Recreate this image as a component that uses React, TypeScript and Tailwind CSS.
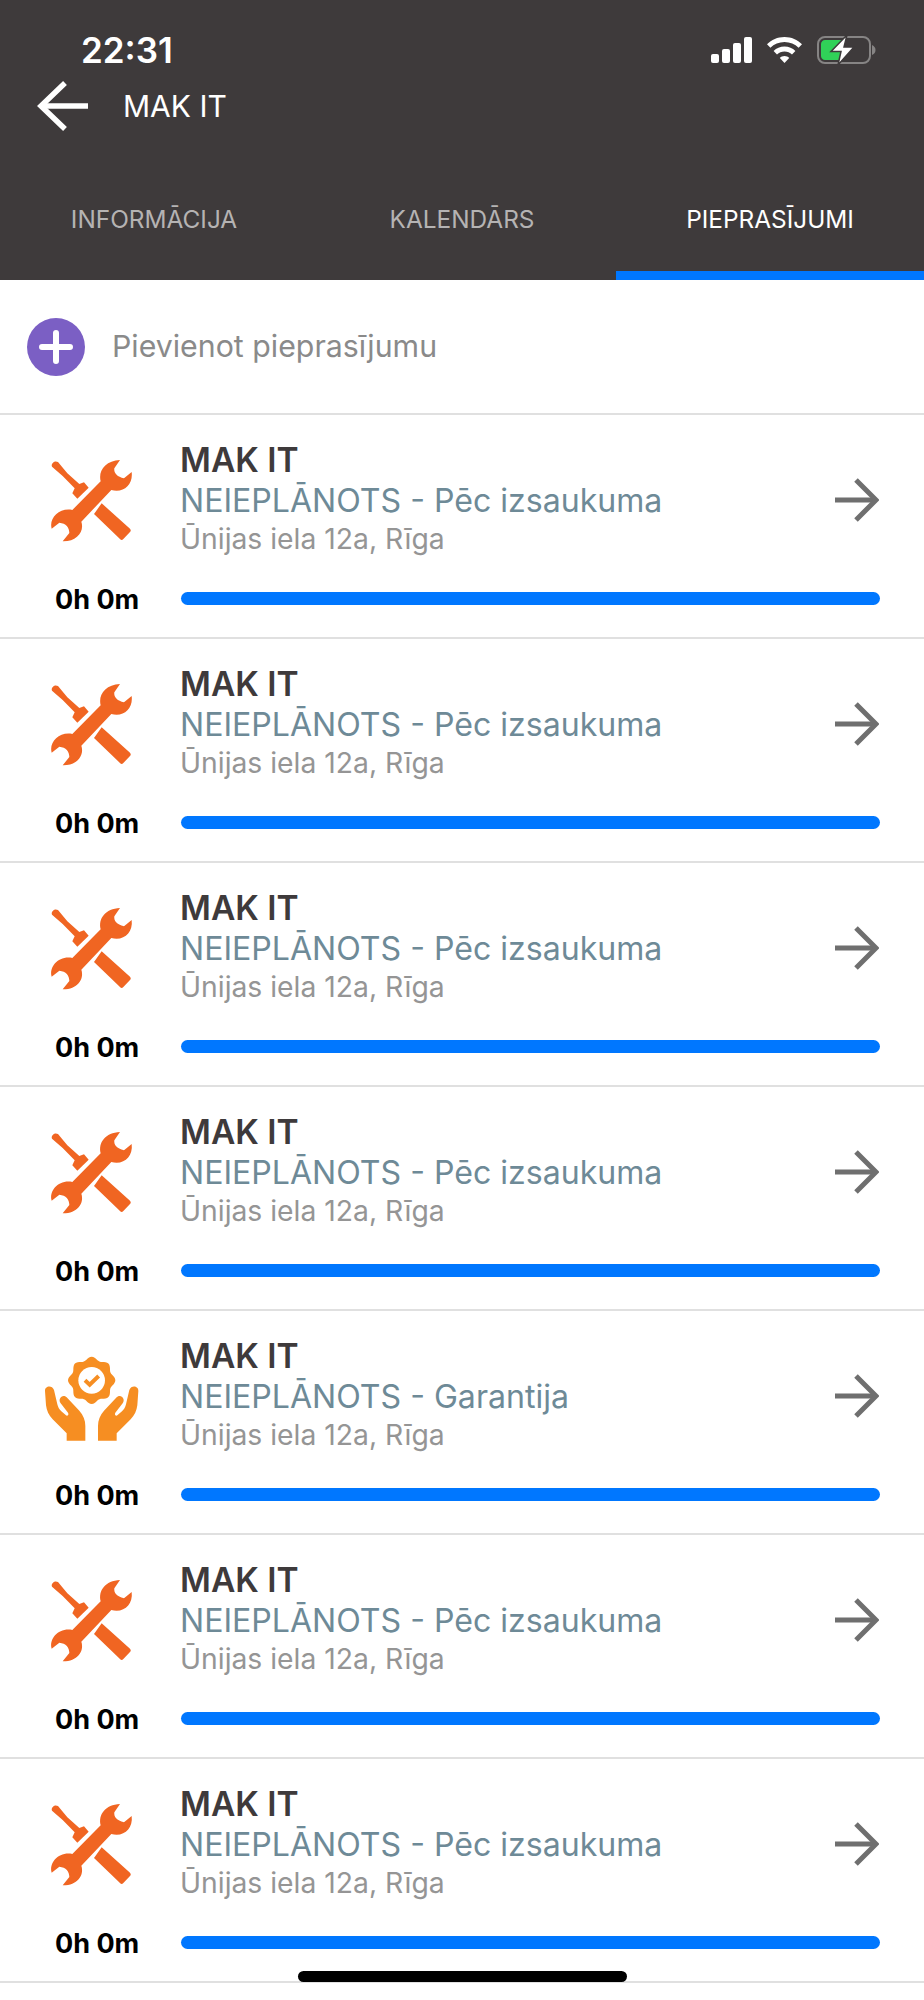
const font = { fontFamily: 'Inter, "Noto Sans", sans-serif' };

const requests = [
  { sub: 'NEIEPLĀNOTS - Pēc izsaukuma', kind: 'tools' },
  { sub: 'NEIEPLĀNOTS - Pēc izsaukuma', kind: 'tools' },
  { sub: 'NEIEPLĀNOTS - Pēc izsaukuma', kind: 'tools' },
  { sub: 'NEIEPLĀNOTS - Pēc izsaukuma', kind: 'tools' },
  { sub: 'NEIEPLĀNOTS - Garantija', kind: 'warranty' },
  { sub: 'NEIEPLĀNOTS - Pēc izsaukuma', kind: 'tools' },
  { sub: 'NEIEPLĀNOTS - Pēc izsaukuma', kind: 'tools' },
];

// scalloped badge outline for the warranty icon
function badgePath(cx: number, cy: number, r: number, lobes: number) {
  const pts: string[] = [];
  for (let i = 0; i < 96; i++) {
    const a = (i / 96) * Math.PI * 2;
    const rad = r + 5 * Math.cos(a * lobes);
    pts.push(`${(cx + rad * Math.sin(a)).toFixed(1)} ${(cy - rad * Math.cos(a)).toFixed(1)}`);
  }
  return 'M' + pts.join('L') + 'Z';
}

function ToolsIcon() {
  return (
    <svg width="130" height="110" viewBox="0 0 390 330" fill="#f06522">
      <path d="M157 210L242 124C234 92 256 62 300 60L283 85C281 98 290 110 312 115L335 96C340 135 310 160 274 150L184 245C194 275 170 305 128 304L148 279C148 262 138 250 118 248L95 266C86 235 118 202 157 210Z" />
      <path d="M96 80C92 70 104 60 114 66L142 100L178 132L192 127L206 143L172 176L157 160L164 145L128 108Z" />
      <path d="M245 190L330 266C333 270 333 273 330 276L310 297C306 301 303 300 300 297L222 222Z" />
    </svg>
  );
}

function WarrantyIcon() {
  const hand =
    'M75 165C74 150 96 146 102 162L112 205C114 214 118 220 124 226L138 238C142 241 148 236 144 230L122 202C112 188 128 172 140 184L178 224C190 238 196 252 196 270L196 314H140V292L98 250C86 238 80 224 78 208Z';
  return (
    <svg width="130" height="110" viewBox="0 0 390 330" fill="#f68e22">
      <path d={badgePath(215, 133, 66, 8)} />
      <circle cx="215" cy="133" r="40" fill="#fff" />
      <path d="M195 133L209 146L236 120" fill="none" stroke="#f68e22" strokeWidth="12" />
      <path d={hand} />
      <path transform="translate(430 0) scale(-1 1)" d={hand} />
    </svg>
  );
}

function StatusIcons() {
  return (
    <div className="flex items-center">
      <svg width="41" height="26" viewBox="0 0 41 26" fill="#fff">
        <rect x="0" y="17" width="8" height="9" rx="2" />
        <rect x="11" y="12" width="8" height="14" rx="2" />
        <rect x="22" y="6" width="8" height="20" rx="2" />
        <rect x="33" y="0" width="8" height="26" rx="2" />
      </svg>
      <svg className="ml-[15px]" width="35" height="26" viewBox="0 0 35 26" fill="#fff">
        <path d="M17.5 0C24.5 0 30.5 2.8 35 7.2L31.6 10.8C28 7.2 23 5 17.5 5S7 7.2 3.4 10.8L0 7.2C4.5 2.8 10.5 0 17.5 0Z" />
        <path d="M17.5 9.5C21.8 9.5 25.6 11.2 28.4 14L25 17.6C23 15.7 20.4 14.5 17.5 14.5S12 15.7 10 17.6L6.6 14C9.4 11.2 13.2 9.5 17.5 9.5Z" />
        <path d="M17.5 19C19.3 19 21 19.7 22.2 20.9L17.5 26L12.8 20.9C14 19.7 15.7 19 17.5 19Z" />
      </svg>
      <svg className="ml-[15px]" width="59" height="30" viewBox="0 0 59 30">
        <rect x="1" y="2" width="52" height="26" rx="7" fill="none" stroke="#868484" strokeWidth="2" />
        <path d="M55 10C57.5 11 58.5 13 58.5 15S57.5 19 55 20Z" fill="#868484" />
        <path d="M4 9C4 6.8 5.8 5 8 5H25V25H8C5.8 25 4 23.2 4 21Z" fill="#30d158" />
        <path d="M30 0L14 16.5H24L21 30L37 12H27Z" fill="#fff" stroke="#3e3a3b" strokeWidth="1.5" />
      </svg>
    </div>
  );
}

function RequestRow({ sub, kind }: { sub: string; kind: string }) {
  return (
    <div className="h-[224px] border-b-2 border-[#e0e0e0] flex flex-col">
      <div className="h-[163px] flex">
        <div className="w-[180px] shrink-0 pl-[20px] pt-[25px]">
          {kind === 'tools' ? <ToolsIcon /> : <WarrantyIcon />}
        </div>
        <div className="flex-1 pt-[24px]">
          <div className="text-[33.5px] leading-[43px] font-semibold text-[#3e3a3b]">MAK IT</div>
          <div className="text-[32.1px] leading-[38px] text-[#6e8a97]">{sub}</div>
          <div className="text-[28.3px] leading-[38px] text-[#959595]">Ūnijas iela 12a, Rīga</div>
        </div>
        <div className="w-[89px] shrink-0 pt-[63px]">
          <svg width="44" height="44" viewBox="0 0 44 44" fill="none" stroke="#6f6f6f" strokeWidth="5">
            <path d="M0 22H41" />
            <path d="M21 2L41 22L21 42" />
          </svg>
        </div>
      </div>
      <div className="flex items-center h-[40px]">
        <div className="w-[181px] shrink-0 pl-[55px] mt-[5px] text-[27px] font-bold text-black">0h 0m</div>
        <div className="w-[699px] h-[13px] rounded-full bg-[#0077ff]" />
      </div>
    </div>
  );
}

export default function App() {
  return (
    <div className="relative w-[924px] h-[2000px] overflow-hidden bg-white" style={font}>
      <div className="h-[280px] bg-[#3e3a3b] flex flex-col">
        <div className="h-[36px] shrink-0" />
        <div className="flex items-center justify-between pl-[81px] pr-[48px] h-[28px]">
          <span className="text-[35px] leading-[28px] font-semibold text-white">22:31</span>
          <StatusIcons />
        </div>
        <div className="flex items-center mt-[17px] pl-[37px]">
          <svg width="51" height="50" viewBox="0 0 51 50" fill="none" stroke="#fff" strokeWidth="5.5">
            <path d="M4 25H51" />
            <path d="M28 2L4 25L28 48" />
          </svg>
          <span className="ml-[35px] text-[30px] text-white">MAK IT</span>
        </div>
        <div className="grid grid-cols-3 mt-auto h-[98px] border-b-[9px] border-transparent">
          <div className="flex items-center justify-center pb-[14px] text-[24.4px] text-[#b5b3b3]">INFORMĀCIJA</div>
          <div className="flex items-center justify-center pb-[14px] text-[24.4px] text-[#b5b3b3]">KALENDĀRS</div>
          <div className="relative flex items-center justify-center pb-[14px] text-[24.4px] text-white">
            PIEPRASĪJUMI
            <div className="absolute left-0 right-0 bottom-[-9px] h-[9px] bg-[#0077ff]" />
          </div>
        </div>
      </div>
      <div className="h-[135px] border-b-2 border-[#e0e0e0] flex items-center pl-[27px]">
        <div className="w-[58px] h-[58px] rounded-full bg-[#7b5fc4] flex items-center justify-center">
          <svg width="34" height="34" viewBox="0 0 34 34" stroke="#fff" strokeWidth="6" strokeLinecap="round">
            <path d="M17 3V31M3 17H31" />
          </svg>
        </div>
        <span className="ml-[27px] text-[30.3px] text-[#8a8a8a]">Pievienot pieprasījumu</span>
      </div>
      {requests.map((r, i) => (
        <RequestRow key={i} sub={r.sub} kind={r.kind} />
      ))}
      <div className="absolute left-[298px] top-[1971px] w-[329px] h-[11px] rounded-full bg-black" />
    </div>
  );
}
